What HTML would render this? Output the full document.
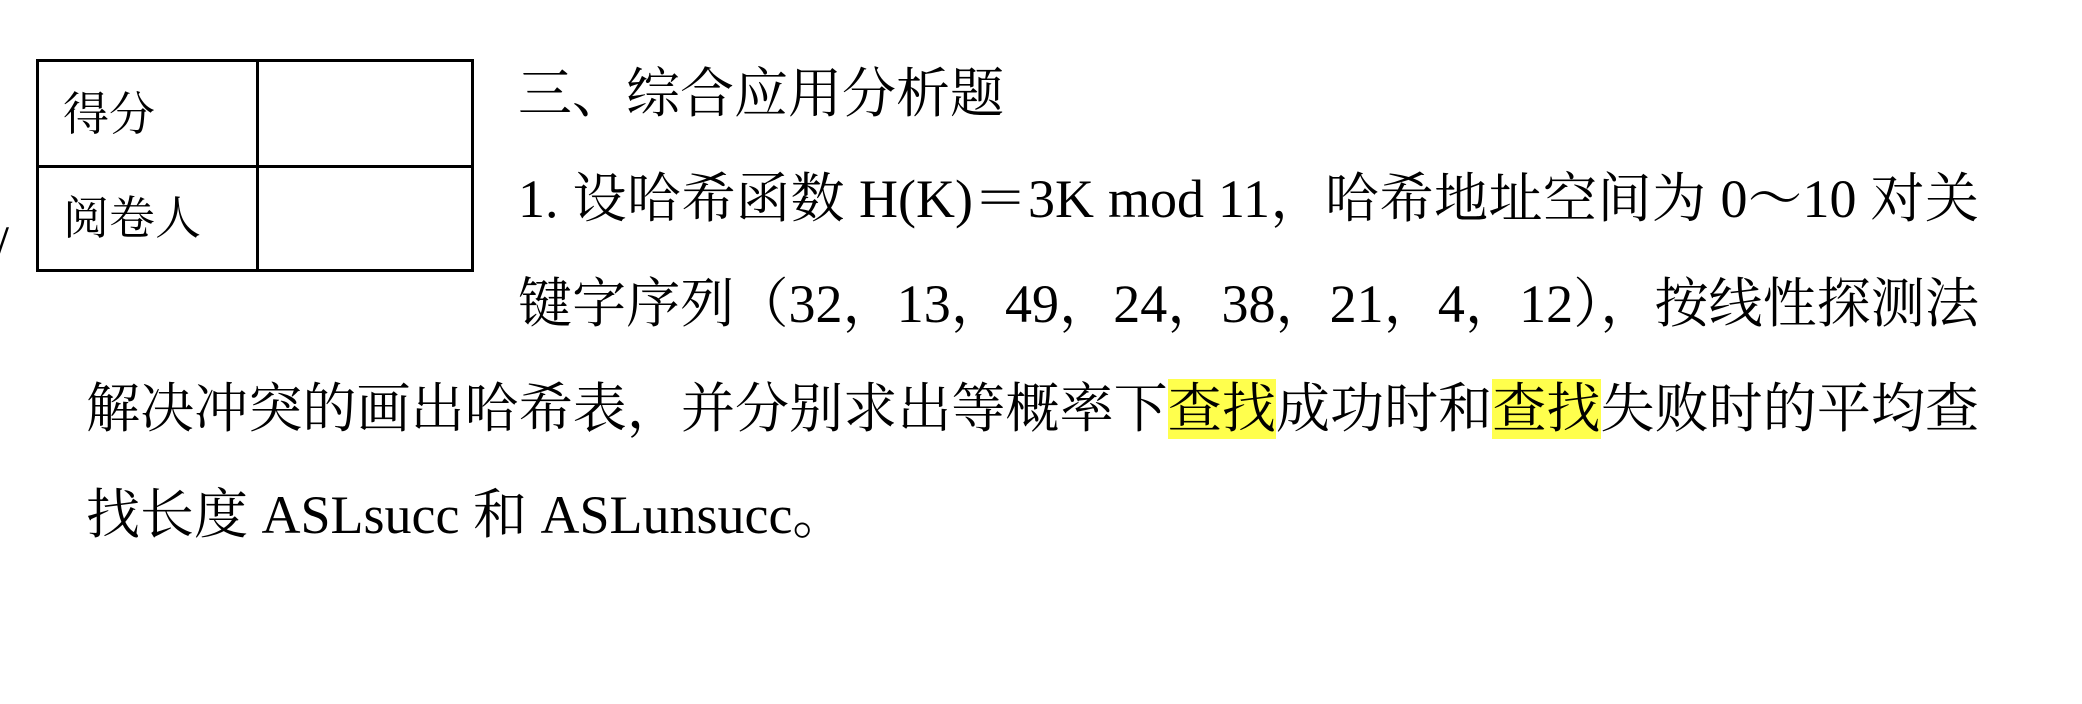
<!DOCTYPE html>
<html><head><meta charset="utf-8"><style>
html,body{margin:0;padding:0;background:#fff;}
body{width:2082px;height:704px;position:relative;overflow:hidden;font-family:"Liberation Serif","Noto Serif CJK SC",serif;color:#000;}
.l{position:absolute;font-size:54px;line-height:105px;height:105px;white-space:nowrap;}
.j{text-align:justify;text-align-last:justify;white-space:normal;}
.hl{background:#ffff4d;}
.tb{position:absolute;left:36px;top:59px;width:438px;height:213px;border:3px solid #000;box-sizing:border-box;}
.v{position:absolute;left:217px;top:0;width:3px;height:100%;background:#000;}
.h{position:absolute;left:0;top:103px;width:100%;height:3px;background:#000;}
.c{position:absolute;left:24px;font-size:46px;line-height:50px;}
</style></head><body>
<div class="tb"><div class="v"></div><div class="h"></div>
<div class="c" style="top:28px">得分</div>
<div class="c" style="top:132px">阅卷人</div>
</div>
<div style="position:absolute;left:-6px;top:218px;font-size:54px;line-height:54px;">/</div>
<div class="l" style="left:518px;top:42px;">三、综合应用分析题</div>
<div class="l j" style="left:518px;top:147px;width:1461px;">1.&nbsp;设哈希函数 H(K)＝3K mod 11，哈希地址空间为 0～10 对关</div>
<div class="l j" style="left:518px;top:252px;width:1461px;">键字序列（32，13，49，24，38，21，4，12），按线性探测法</div>
<div class="l j" style="left:86px;top:357px;width:1893px;">解决冲突的画出哈希表，并分别求出等概率下<span class="hl">查找</span>成功时和<span class="hl">查找</span>失败时的平均查</div>
<div class="l" style="left:86px;top:463px;">找长度 ASLsucc 和 ASLunsucc。</div>
</body></html>
